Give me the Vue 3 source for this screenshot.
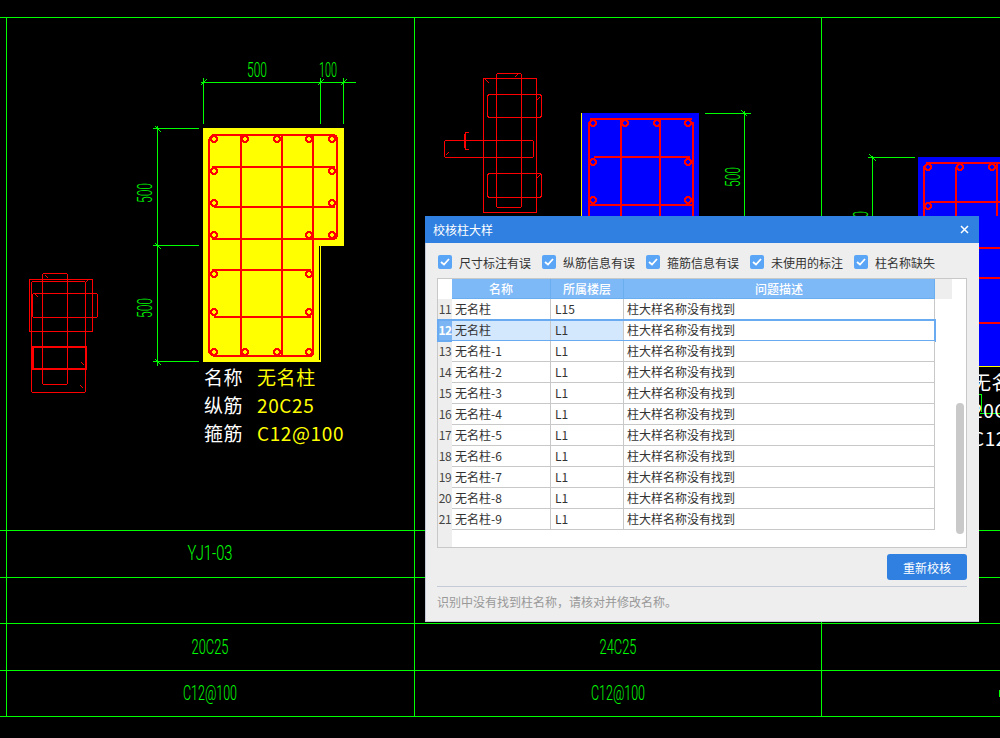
<script setup>
import { ref } from 'vue';

const checks = ref([
    { label: '尺寸标注有误' },
    { label: '纵筋信息有误' },
    { label: '箍筋信息有误' },
    { label: '未使用的标注' },
    { label: '柱名称缺失' },
]);

const rows = [
    { no: 11, name: '无名柱', floor: 'L15' },
    { no: 12, name: '无名柱', floor: 'L1', active: true },
    { no: 13, name: '无名柱-1', floor: 'L1' },
    { no: 14, name: '无名柱-2', floor: 'L1' },
    { no: 15, name: '无名柱-3', floor: 'L1' },
    { no: 16, name: '无名柱-4', floor: 'L1' },
    { no: 17, name: '无名柱-5', floor: 'L1' },
    { no: 18, name: '无名柱-6', floor: 'L1' },
    { no: 19, name: '无名柱-7', floor: 'L1' },
    { no: 20, name: '无名柱-8', floor: 'L1' },
    { no: 21, name: '无名柱-9', floor: 'L1' },
];

// cad grid
const gridH = [17, 530, 577, 623, 670, 716];
const gridV = [6, 414, 821];

// [x, y, width, height, corner]
const ghostRects = [
    [29, 279, 63, 52, 0], [42, 273, 25, 111, 2], [31, 281, 54, 111, 2], [32, 293, 65, 24, 2], [32, 346, 54, 23, 1], [33, 347, 52, 21, 1],
    [483, 78, 53, 134, 0], [496, 73, 25, 134, 2], [487, 94, 54, 23, 3], [487, 173, 54, 24, 3], [444, 140, 89, 17, 2],
];

// stirrup hooks on the loose rebar sketches
const hooks = [
    [45, 275, 48, 278], [89, 279, 86, 282], [35, 294, 38, 297], [84, 365, 81, 362], [83, 388, 80, 385],
    [485, 79, 489, 83], [518, 74, 515, 77], [540, 97, 537, 100], [540, 175, 537, 178], [449, 152, 446, 155],
];

// thick bars [x1, y1, x2, y2]
const bars = [
    [213, 135, 335, 135], [209, 139, 209, 352], [213, 356, 312, 356], [337, 139, 337, 235],
    [241, 136, 241, 356], [282, 136, 282, 356], [313, 136, 313, 352],
    [212, 167, 335, 167], [214, 207, 335, 207], [212, 239, 335, 239], [212, 270, 311, 270], [214, 317, 311, 317],
    [209, 139, 213, 135], [335, 135, 337, 139], [337, 235, 335, 239], [209, 352, 213, 356], [312, 356, 313, 352],
    [590, 119, 692, 119], [589, 122, 589, 216], [693, 122, 693, 216], [621, 119, 621, 216], [660, 119, 660, 216],
    [594, 157, 690, 157], [590, 205, 692, 205],
    [926, 163, 1000, 163], [924, 166, 924, 216], [956, 167, 956, 216], [997, 163, 997, 216], [930, 202, 1000, 202],
    [979, 248, 1000, 248], [979, 278, 1000, 278], [979, 323, 1000, 323],
];

const rings = [
    [214, 139], [245, 139], [277, 139], [309, 139], [332, 139], [214, 171], [332, 171], [214, 203], [332, 203],
    [214, 235], [309, 235], [332, 235], [214, 274], [309, 274], [214, 312], [309, 312],
    [214, 352], [245, 352], [277, 352], [309, 352],
    [593, 123], [625, 123], [657, 123], [688, 123], [593, 162], [688, 162], [593, 200], [688, 200],
    [928, 167], [960, 167], [992, 167], [928, 206],
];

// thin dimension lines
const dims = [
    [200, 82, 355, 82], [203, 77, 203, 123], [320, 77, 320, 123], [343, 77, 343, 123],
    [157, 125, 157, 365], [152, 128, 198, 128], [152, 245, 198, 245], [152, 361, 198, 361],
    [704, 113, 750, 113], [744, 110, 744, 216],
    [867, 157, 914, 157], [872, 155, 872, 216],
    [979, 413, 1000, 413],
];

const ticks = [
    [201, 85, 207, 79], [318, 85, 324, 79], [341, 85, 347, 79],
    [155, 126, 161, 132], [155, 243, 161, 249], [155, 359, 161, 365],
    [741, 110, 747, 116], [869, 154, 876, 161],
];

const labels = [
    { x: 210, y: 560, w: 45, text: 'YJ1-03' },
    { x: 210, y: 654, w: 37, text: '20C25' },
    { x: 618, y: 654, w: 37, text: '24C25' },
    { x: 210, y: 700, w: 54, text: 'C12@100' },
    { x: 618, y: 700, w: 54, text: 'C12@100' },
    { x: 257, y: 77, w: 20, text: '500' },
    { x: 328, y: 77, w: 18, text: '100' },
];

const sideLabels = [
    { x: 145, y: 193, text: '500' },
    { x: 145, y: 308, text: '500' },
    { x: 733, y: 177, text: '500' },
    { x: 861, y: 221, text: '500' },
];
</script>

<template>
    <div class="page">
        <!-- cad drawing -->
        <svg class="cad" width="1000" height="738" viewBox="0 0 1000 738">
            <g class="grid">
                <line v-for="y in gridH" :key="'h' + y" x1="0" :y1="y + 0.5" x2="1000" :y2="y + 0.5" />
                <line v-for="x in gridV" :key="'v' + x" :x1="x + 0.5" y1="17" :x2="x + 0.5" y2="716" />
            </g>

            <!-- column fills -->
            <path d="M203 128H344V246H321V362H203Z" fill="#ffff00" />
            <line x1="319.5" y1="246" x2="319.5" y2="360" stroke="#000" />
            <rect x="581" y="113" width="1" height="110" fill="#ffff00" />
            <rect x="582" y="113" width="117" height="110" fill="#0000ff" />
            <rect x="918" y="157" width="82" height="209" fill="#0000ff" />
            <rect x="979" y="366" width="21" height="1" fill="#ffff00" />

            <g class="ghost">
                <rect v-for="(r, i) in ghostRects" :key="i" :x="r[0] + 0.5" :y="r[1] + 0.5" :width="r[2]" :height="r[3]" :rx="r[4]" />
                <line v-for="(h, i) in hooks" :key="'k' + i" :x1="h[0]" :y1="h[1]" :x2="h[2]" :y2="h[3]" />
                <path d="M469 132.500H466Q465 132.500 465 134V148Q465 149.500 466 149.500H469" />
            </g>

            <g class="bars">
                <line v-for="(b, i) in bars" :key="i" :x1="b[0]" :y1="b[1]" :x2="b[2]" :y2="b[3]" />
            </g>
            <g class="rings">
                <circle v-for="(c, i) in rings" :key="i" :cx="c[0]" :cy="c[1]" r="3" />
            </g>

            <g class="grid">
                <line v-for="(d, i) in dims" :key="i" :x1="d[0] + 0.5" :y1="d[1] + 0.5" :x2="d[2] + 0.5" :y2="d[3] + 0.5" />
                <line v-for="(t, i) in ticks" :key="'t' + i" :x1="t[0]" :y1="t[1]" :x2="t[2]" :y2="t[3]" />
                <path d="M979 394H981V412" fill="none" />
            </g>
            <rect x="999" y="690" width="1" height="7" fill="#00ff00" />

            <text v-for="l in labels" :key="l.x + l.text + l.y" class="dim-text" :x="l.x" :y="l.y" :textLength="l.w" lengthAdjust="spacingAndGlyphs">{{ l.text }}</text>
            <text
                v-for="l in sideLabels"
                :key="l.x + '-' + l.y"
                class="dim-text"
                textLength="20"
                lengthAdjust="spacingAndGlyphs"
                :transform="`translate(${l.x + 7} ${l.y}) rotate(-90)`"
            >{{ l.text }}</text>

            <!-- column info -->
            <g class="info">
                <text x="204" y="385">名称</text>
                <text x="204" y="413">纵筋</text>
                <text x="204" y="441">箍筋</text>
                <text class="yellow" x="257" y="385">无名柱</text>
                <text class="yellow" x="257" y="413">20C25</text>
                <text class="yellow" x="257" y="441">C12@100</text>
                <text x="972" y="390">无名柱</text>
                <text x="972" y="418">20C25</text>
                <text x="972" y="446">C12@100</text>
            </g>
        </svg>

        <!-- dialog -->
        <div class="dialog">
            <div class="dialog-head">
                <span>校核柱大样</span>
                <svg class="close" width="9" height="9" viewBox="0 0 9 9">
                    <path d="M1 1L8 8M8 1L1 8" stroke="#fff" stroke-width="1.5" />
                </svg>
            </div>

            <div class="dialog-body">
                <div class="checks">
                    <label v-for="c in checks" :key="c.label" class="check">
                        <span class="box">
                            <svg width="10" height="8" viewBox="0 0 10 8">
                                <path d="M1 4L4 6.500L9 1" fill="none" stroke="#fff" stroke-width="1.800" />
                            </svg>
                        </span>
                        {{ c.label }}
                    </label>
                </div>

                <div class="table-box">
                    <div class="table">
                        <div class="row head">
                            <div class="no"></div>
                            <div class="cell c-name">名称</div>
                            <div class="cell c-floor">所属楼层</div>
                            <div class="cell c-desc">问题描述</div>
                            <div class="head-rest"></div>
                        </div>
                        <div v-for="r in rows" :key="r.no" class="row" :class="{ active: r.active }">
                            <div class="no">{{ r.no }}</div>
                            <div class="cell c-name">{{ r.name }}</div>
                            <div class="cell c-floor">{{ r.floor }}</div>
                            <div class="cell c-desc">柱大样名称没有找到</div>
                        </div>
                    </div>
                    <div class="thumb"></div>
                </div>

                <div class="actions">
                    <button class="recheck">重新校核</button>
                </div>
                <div class="hint">识别中没有找到柱名称，请核对并修改名称。</div>
            </div>
        </div>
    </div>
</template>

<style scoped>
.page {
    position: relative;
    width: 1000px;
    height: 738px;
    overflow: hidden;
    background: #000;
    font-family: "Noto Sans CJK SC", "Liberation Sans", sans-serif;
}

.cad {
    position: absolute;
    top: 0;
    left: 0;
}

.grid line,
.grid path {
    stroke: #00ff00;
    stroke-width: 1;
    shape-rendering: crispEdges;
}

.ghost rect,
.ghost path,
.ghost line {
    fill: none;
    stroke: #ff0000;
    stroke-width: 1.2;
    shape-rendering: crispEdges;
}

.bars line {
    stroke: #ff0000;
    stroke-width: 2.6;
    shape-rendering: crispEdges;
}

.rings circle {
    fill: none;
    stroke: #ff0000;
    stroke-width: 2.4;
    shape-rendering: crispEdges;
}

.dim-text {
    fill: #00ff00;
    font-family: Roboto, "Liberation Sans", sans-serif;
    font-size: 20px;
    font-weight: 300;
    text-anchor: middle;
}

.info text {
    fill: #fff;
    font-size: 19px;
    letter-spacing: 0.6px;
}

.info text.yellow {
    fill: #ffff00;
}

/* Dialog */
.dialog {
    position: absolute;
    top: 216px;
    left: 425px;
    width: 554px;
    height: 406px;
    box-sizing: border-box;
    display: flex;
    flex-direction: column;
    background: #eeeeee;
    border-left: 1px solid #c5cad8;
    border-bottom: 1px solid #c5cad8;
    font-size: 12px;
    color: #333;
}

.dialog-head {
    display: flex;
    flex: none;
    align-items: center;
    justify-content: space-between;
    height: 27px;
    margin-left: -1px;
    padding: 0 10px 0 8px;
    background: #2f80e0;
    color: #fff;
}

.dialog-body {
    display: flex;
    flex: 1;
    flex-direction: column;
    padding: 8px 12px 0 11px;
}

.checks {
    display: flex;
    height: 22px;
    padding-left: 1px;
    gap: 11px;
    align-items: center;
}

.check {
    display: flex;
    width: 93px;
    gap: 7px;
    align-items: center;
    white-space: nowrap;
}

.box {
    display: flex;
    flex: none;
    align-items: center;
    justify-content: center;
    width: 14px;
    height: 14px;
    border-radius: 2px;
    background: #5aa5f5;
}

.table-box {
    position: relative;
    height: 270px;
    box-sizing: border-box;
    margin-top: 5px;
    border: 1px solid #c8c8c8;
    background: linear-gradient(90deg, #eeeeee 14px, #fff 14px);
}

.table {
    display: flex;
    flex-direction: column;
}

.row {
    display: flex;
    height: 21px;
    box-sizing: border-box;
    line-height: 20px;
    white-space: nowrap;
}

.no {
    flex: none;
    width: 14px;
    font-size: 12px;
    text-align: center;
    overflow: visible;
    letter-spacing: -0.5px;
    color: #444;
}

.cell {
    flex: none;
    box-sizing: border-box;
    padding-left: 3px;
    background: #fff;
    border-right: 1px solid #c8c8c8;
    border-bottom: 1px solid #c8c8c8;
}

.c-name {
    width: 99px;
}

.c-floor {
    width: 73px;
    padding-left: 4px;
}

.c-desc {
    width: 311px;
}

.row.head {
    height: 20px;
    color: #fff;
    font-weight: 500;
    text-align: center;
}

.row.head .no {
    background: #fff;
}

.row.head .cell {
    padding: 0;
    line-height: 19px;
    background: #7db8f7;
    border-right: 1px solid #6aaef0;
    border-bottom: 1px solid #6aaef0;
}

.head-rest {
    width: 17px;
    height: 20px;
    background: #eeeeee;
}

.row.active {
    box-sizing: border-box;
    outline: 2px solid #6aaaf0;
    outline-offset: -1px;
    width: 497px;
}

.row.active .no {
    background: #7cb5f3;
    color: #fff;
    font-weight: 700;
}

.row.active .c-name,
.row.active .c-floor {
    background: #d3e7fd;
}

.thumb {
    position: absolute;
    top: 124px;
    right: 2px;
    width: 8px;
    height: 131px;
    border-radius: 4px;
    background: #c9c9c9;
}

.actions {
    display: flex;
    justify-content: flex-end;
    padding-top: 6px;
}

.recheck {
    width: 80px;
    height: 26px;
    padding: 0;
    border: none;
    border-radius: 3px;
    background: #2f80e0;
    color: #fff;
    font-family: inherit;
    font-size: 12px;
}

.hint {
    margin-top: 6px;
    padding-top: 6px;
    border-top: 1px solid #c5cad8;
    line-height: 18px;
    color: #999;
}
</style>

<style>
html,
body {
    margin: 0;
    background: #000;
}
</style>
